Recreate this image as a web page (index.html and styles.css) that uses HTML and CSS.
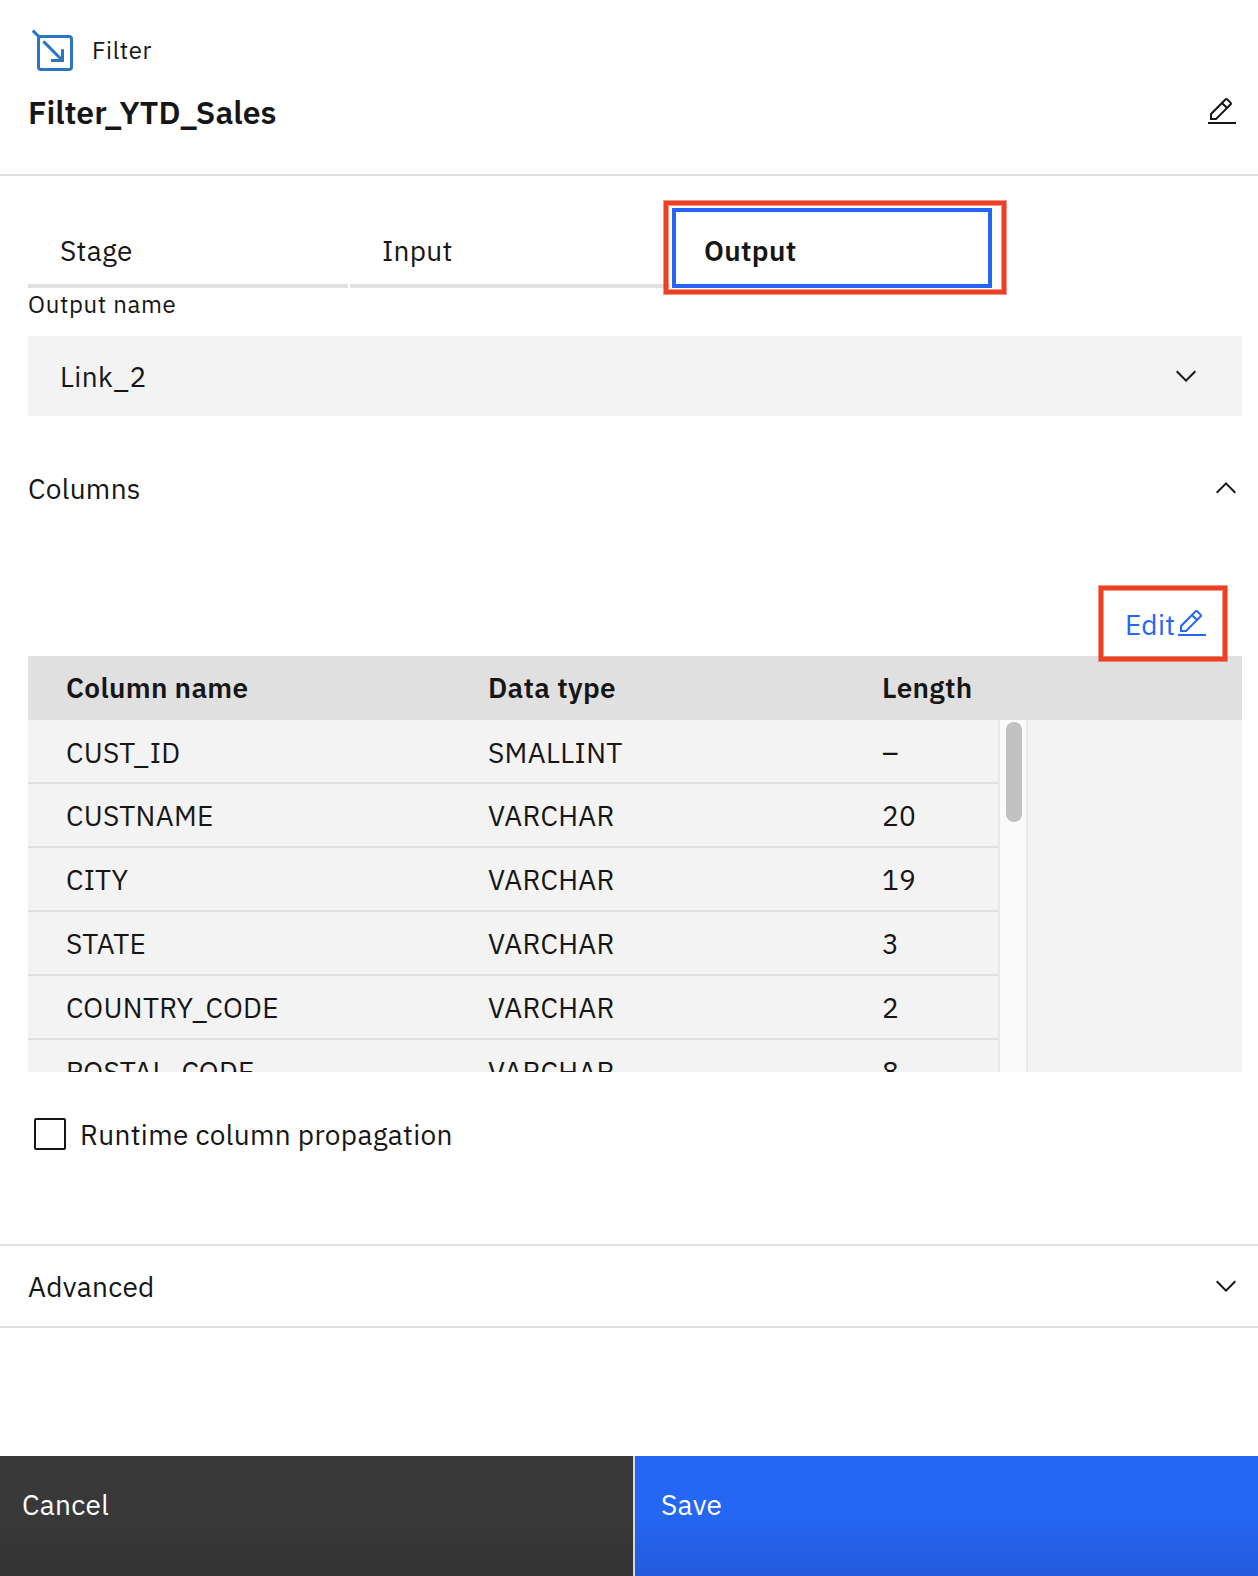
FILE: index.html
```html
<!DOCTYPE html>
<html lang="en">
<head>
<meta charset="utf-8">
<title>Filter_YTD_Sales</title>
<link rel="stylesheet" href="styles.css">
</head>
<body>
<svg class="defs" aria-hidden="true">
  <symbol id="edit" viewBox="0 0 32 32"><path d="M2 26h28v2H2zM25.4 9c.8-.8.8-2 0-2.8l-3.6-3.6c-.8-.8-2-.8-2.8 0l-15 15V24h6.4l15-15zm-5-5L24 7.6l-3 3L17.4 7l3-3zM6 22v-3.6l10-10 3.6 3.6-10 10H6z"/></symbol>
  <symbol id="chevron-down" viewBox="0 0 16 16"><path d="M8 11 3 6l.7-.7L8 9.6l4.3-4.3.7.7z"/></symbol>
  <symbol id="chevron-up" viewBox="0 0 16 16"><path d="m8 5 5 5-.7.7L8 6.4l-4.3 4.3L3 10z"/></symbol>
</svg>
<main class="panel">
  <header class="header">
    <div class="kind">
      <svg class="kind-icon" viewBox="0 0 46 46"><rect x="8.5" y="8.5" width="33" height="33" rx="2.5"/><path d="M2.8 2.6 9 8.8M13.4 13.4 32 32M32.5 21.2v11.3H21"/></svg>
      <span class="kind-name">Filter</span>
    </div>
    <div class="title-row">
      <h1 class="title">Filter_YTD_Sales</h1>
      <svg class="icon"><use href="#edit"/></svg>
    </div>
  </header>

  <section class="content">
    <nav class="tabs">
      <button class="tab">Stage</button>
      <button class="tab">Input</button>
      <div class="tab-wrap">
        <button class="tab selected">Output</button>
        <span class="callout callout-tab"></span>
      </div>
    </nav>
    <div class="label">Output name</div>
    <div class="select"><span class="text">Link_2</span><svg class="icon"><use href="#chevron-down"/></svg></div>
    <div class="section-head"><span class="text">Columns</span><svg class="icon"><use href="#chevron-up"/></svg></div>

    <div class="edit-row">
      <a class="edit"><span class="edit-text">Edit</span><svg class="icon"><use href="#edit"/></svg><span class="callout callout-edit"></span></a>
    </div>
    <div class="table">
      <div class="row table-head"><span>Column name</span><span>Data type</span><span>Length</span></div>
      <div class="table-body">
        <div class="rows">
          <div class="row"><span>CUST_ID</span><span>SMALLINT</span><span>–</span></div>
          <div class="row"><span>CUSTNAME</span><span>VARCHAR</span><span>20</span></div>
          <div class="row"><span>CITY</span><span>VARCHAR</span><span>19</span></div>
          <div class="row"><span>STATE</span><span>VARCHAR</span><span>3</span></div>
          <div class="row"><span>COUNTRY_CODE</span><span>VARCHAR</span><span>2</span></div>
          <div class="row"><span>POSTAL_CODE</span><span>VARCHAR</span><span>8</span></div>
        </div>
        <div class="scrollbar"><div class="thumb"></div></div>
      </div>
    </div>
    <label class="check"><span class="box"></span><span class="text">Runtime column propagation</span></label>
  </section>

  <section class="advanced"><span class="text">Advanced</span><svg class="icon"><use href="#chevron-down"/></svg></section>

  <footer class="footer">
    <button class="btn cancel">Cancel</button>
    <button class="btn save">Save</button>
  </footer>
</main>
</body>
</html>
```
FILE: styles.css
```css
* { box-sizing: border-box; }
body {
  margin: 0;
  background: #fff;
  color: #161616;
  font-family: "IBM Plex Sans", Roboto, sans-serif;
  font-size: 28px;
  line-height: 36px;
  letter-spacing: .32px;
}
button { font: inherit; letter-spacing: inherit; color: inherit; border: 0; text-align: left; border-radius: 0; }
.defs { display: none; }
.panel { display: flex; flex-direction: column; height: 1576px; overflow: hidden; }
.icon { display: block; flex: none; width: 32px; height: 32px; fill: currentColor; }
.text { padding-top: 2px; }

.header { height: 176px; padding: 28px 20px 0 28px; border-bottom: 2px solid #e0e0e0; }
.kind { display: flex; align-items: center; gap: 16px; height: 46px; padding-left: 2px; }
.kind-icon { width: 46px; height: 46px; fill: none; stroke: #2c74c4; stroke-width: 3; }
.kind-name { padding-bottom: 2px; font-size: 24px; letter-spacing: .64px; }
.title-row { display: flex; align-items: center; justify-content: space-between; height: 32px; margin-top: 22px; }
.title { margin: 0; font-size: 32px; font-weight: 600; letter-spacing: 0; }

.content { height: 1068px; padding: 32px 16px 0 28px; }
.tabs { display: flex; gap: 2px; }
.tab { width: 320px; height: 80px; padding: 9px 32px 0; background: #fff; border-bottom: 4px solid #e0e0e0; }
.tab-wrap { position: relative; }
.tab.selected { padding: 5px 28px 0; border: 4px solid #2566f6; font-weight: 600; }
.callout {
  position: absolute;
  border: 4px solid #eb4024;
  box-shadow: 0 0 0 1px rgba(235, 64, 36, .55), inset 0 0 0 1px rgba(235, 64, 36, .55);
  pointer-events: none;
}
.callout-tab { left: -8px; top: -7px; width: 342px; height: 93px; }
.label { height: 48px; font-size: 24px; line-height: 32px; letter-spacing: .64px; }
.select { display: flex; align-items: center; justify-content: space-between; height: 80px; padding: 0 40px 0 32px; background: #f3f3f3; }

.section-head { display: flex; align-items: center; justify-content: space-between; height: 80px; margin-top: 32px; }
.edit-row { display: flex; justify-content: flex-end; height: 128px; padding: 80px 34px 0 0; }
.edit { position: relative; display: flex; width: 83px; height: 32px; color: #2566f6; }
.edit-text { width: 51px; line-height: 34px; }
.callout-edit { left: -26px; top: -22px; width: 128px; height: 75px; }

.table { height: 416px; background: #f3f3f3; overflow: hidden; }
.row { display: grid; grid-template-columns: 422px 394px 1fr; height: 64px; padding: 2px 0 0 38px; border-bottom: 2px solid #e0e0e0; line-height: 60px; }
.table-head { padding-top: 0; background: #e0e0e0; border: 0; line-height: 64px; font-weight: 600; }
.table-body { display: flex; height: 352px; }
.rows { width: 970px; height: 352px; overflow: hidden; }
.rows .row:first-child { padding-top: 3px; }
.scrollbar { width: 30px; padding: 2px 4px 0 6px; background: #fafafa; border: solid #e8e8e8; border-width: 0 2px; }
.thumb { width: 16px; height: 100px; border-radius: 8px; background: #c1c1c1; }

.check { display: flex; align-items: center; gap: 14px; margin-top: 43px; padding-left: 6px; }
.box { width: 32px; height: 32px; border: 2px solid #161616; border-radius: 2px; }

.advanced { display: flex; align-items: center; justify-content: space-between; height: 84px; padding: 0 16px 0 28px; border: solid #e0e0e0; border-width: 2px 0; }

.footer { display: flex; height: 120px; margin-top: auto; }
.btn { padding: 0 22px 22px; color: #fff; }
.cancel { width: 635px; background: linear-gradient(#393939 45%, #333); border-right: 2px solid #d8d8d8; }
.save { flex: 1; padding-left: 26px; background: linear-gradient(#2567f5 45%, #235bdc); }
```
